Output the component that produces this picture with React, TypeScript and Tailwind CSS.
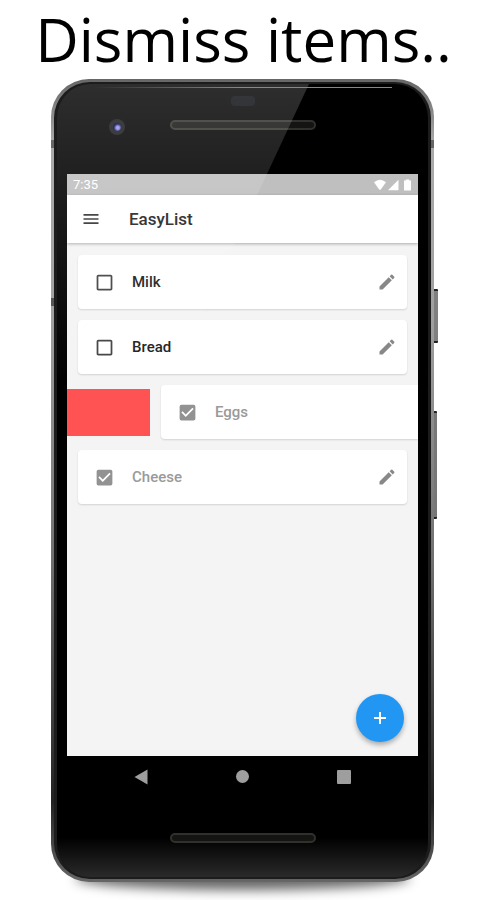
import { MdCheckBox, MdCheckBoxOutlineBlank, MdEdit, MdMenu } from "react-icons/md";

type Item = {
  name: string;
  done: boolean;
  dismissing?: boolean;
};

const items: Item[] = [
  { name: "Milk", done: false },
  { name: "Bread", done: false },
  { name: "Eggs", done: true, dismissing: true },
  { name: "Cheese", done: true },
];

function StatusBar() {
  return (
    <div className="flex h-[21px] items-center justify-between bg-[#bfbfbf] px-1.5 text-white">
      <span className="text-[13px] leading-5">7:35</span>
      <svg width="38" height="12" viewBox="0 0 38 12" fill="currentColor" aria-hidden="true">
        <path d="M0 3.2Q6 -1.8 12 3.2L6.8 10.4Q6 11.2 5.2 10.4Z" />
        <path d="M24.5 0.8V11.2H14Z" />
        <path d="M30 1.6H31.8V0.5H35.2V1.6H37V11.6H30Z" />
      </svg>
    </div>
  );
}

function ListItem({ item }: { item: Item }) {
  const Box = item.done ? MdCheckBox : MdCheckBoxOutlineBlank;

  return (
    <li className={item.dismissing ? "flex items-center gap-[11px]" : "flex px-[11px]"}>
      {item.dismissing && <div className="h-[47px] w-[83px] shrink-0 bg-[#ff5252]" />}
      <div
        className={`flex h-[54px] grow items-center bg-white pl-4 shadow-[0_1px_2px_rgba(0,0,0,0.14)] ${
          item.dismissing ? "rounded-l-sm" : "rounded-sm pr-2.5"
        }`}
      >
        <label className="flex grow items-center gap-[17px]">
          <input type="checkbox" defaultChecked={item.done} className="sr-only" />
          <Box className={`size-[21px] ${item.done ? "text-[#929292]" : "text-[#444]"}`} aria-hidden="true" />
          <span className={`text-[15px] leading-5 font-medium ${item.done ? "text-[#9a9a9a]" : "text-[#222]"}`}>
            {item.name}
          </span>
        </label>
        {!item.dismissing && (
          <button type="button" aria-label={`Edit ${item.name}`} className="text-[#888]">
            <MdEdit className="size-5" />
          </button>
        )}
      </div>
    </li>
  );
}

function NavBar() {
  return (
    <nav className="flex h-[41px] items-center justify-between px-[67px] text-[#9e9e9e]">
      <button type="button" aria-label="Back">
        <svg width="14" height="16" viewBox="0 0 14 16" fill="currentColor">
          <path d="M13.5 0.5V15.5L0.5 8Z" />
        </svg>
      </button>
      <button type="button" aria-label="Home" className="size-[13px] rounded-full bg-[#9e9e9e]" />
      <button type="button" aria-label="Recent apps" className="size-[14px] rounded-[1px] bg-[#9e9e9e]" />
    </nav>
  );
}

function Speaker() {
  return <div className="h-2.5 w-[146px] rounded-full border-2 border-[#30302c] bg-[#141412]" />;
}

export default function App() {
  return (
    <div className="bg-white pb-[18px] font-['Roboto',sans-serif]">
      <h1 className="text-center font-['Open_Sans',sans-serif] text-[60px] leading-[79px] whitespace-nowrap text-black">
        Dismiss items..
      </h1>

      <div className="relative mr-[53px] ml-[51px]">
        {/* ground shadow */}
        <div className="absolute inset-x-6 -bottom-2 h-6 rounded-[50%] bg-black/60 blur-[6px]" />
        {/* side keys */}
        <div className="absolute top-[210px] -right-1 h-[54px] w-1 rounded-r-[1px] border-y-2 border-[#222] bg-[#808080]" />
        <div className="absolute top-[332px] -right-[3px] h-[108px] w-[3px] rounded-r-[1px] border-y-2 border-[#222] bg-[#777]" />

        <div className="relative overflow-hidden rounded-[38px] bg-[linear-gradient(180deg,#666_0%,#aaa_8%,#a0a0a0_30%,#707070_60%,#222_90%,#666_100%)] p-[3px]">
          {/* antenna bands */}
          <div className="absolute inset-x-0 top-[61px] h-2 bg-[#666]" />
          <div className="absolute top-[219px] left-0 h-2 w-1 bg-[#555]" />
          <div className="relative overflow-hidden rounded-[36px] border-x-3 border-t-2 border-b-2 border-[#1c1c1c] bg-[linear-gradient(180deg,#000_95%,#2a2a2a_100%)] px-2.5">
            <div className="flex h-[90px] flex-col items-center pt-3">
              <div className="h-2.5 w-6 rounded-sm bg-[#0a0c10]" />
              <div className="mt-3.5">
                <Speaker />
              </div>
            </div>

            <div className="relative flex h-[582px] flex-col bg-[#f4f4f4]">
              <StatusBar />
              <header className="flex h-12 items-center gap-7 bg-white pl-3.5 shadow-[0_1px_3px_rgba(0,0,0,0.3)]">
                <button type="button" aria-label="Menu" className="text-[#333]">
                  <MdMenu className="size-5" />
                </button>
                <h2 className="text-[17px] leading-6 font-medium text-[#222]">EasyList</h2>
              </header>
              <ul className="flex flex-col gap-[11px] pt-3">
                {items.map((item) => (
                  <ListItem key={item.name} item={item} />
                ))}
              </ul>
              <button
                type="button"
                aria-label="Add item"
                className="absolute right-3.5 bottom-3.5 flex size-12 items-center justify-center rounded-full bg-[#2196f3] text-white shadow-[0_3px_5px_rgba(0,0,0,0.3)]"
              >
                <svg width="14" height="14" viewBox="0 0 14 14" stroke="currentColor" strokeWidth="2">
                  <path d="M7 1V13M1 7H13" />
                </svg>
              </button>
            </div>

            <NavBar />
            <div className="flex h-[80px] justify-center pt-9">
              <Speaker />
            </div>

            {/* glass reflection */}
            <div className="pointer-events-none absolute inset-x-0 top-0 h-[300px] bg-linear-to-b from-white/18 to-transparent [clip-path:polygon(0_0,252px_0,112px_100%,0_100%)]" />
            <div className="absolute inset-x-9 top-[3px] h-px bg-linear-to-r from-transparent via-[#888] to-[#888]" />
            {/* front camera */}
            <div className="absolute top-[35px] left-[52px] flex size-4 items-center justify-center rounded-full bg-[#3d3d3f]">
              <div className="size-2 rounded-full bg-[radial-gradient(circle_at_60%_60%,#a5a5e8_20%,#2b2b66_60%)]" />
            </div>
          </div>
        </div>
      </div>
    </div>
  );
}
